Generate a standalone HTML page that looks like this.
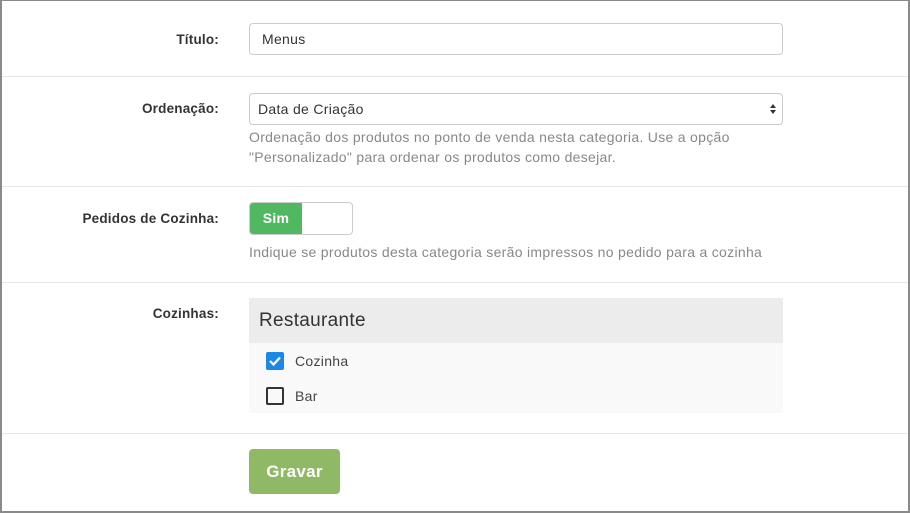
<!DOCTYPE html>
<html><head><style>
*{box-sizing:border-box}
body{margin:0;width:910px;height:513px;overflow:hidden;font-family:"Liberation Sans",sans-serif;background:#fff;letter-spacing:0.3px}
.frame{position:absolute;left:0;top:0;width:910px;height:513px;border:2px solid #8a8a8a;border-top:1px solid #8a8a8a}
.lbl{position:absolute;right:691px;font-weight:bold;font-size:13.5px;color:#333;letter-spacing:0.2px}
.hr{position:absolute;left:2px;right:2px;height:1px;background:#e6e6e6}
.inp{position:absolute;left:249px;width:534px;height:32px;border:1px solid #ccc;border-radius:4px;font-size:14px;color:#333;padding:7px 12px}
.help{position:absolute;left:249px;font-size:14px;color:#888;line-height:20px}
</style></head><body>
<div class="frame"></div>
<div class="lbl" style="top:32px">Título:</div>
<div class="inp" style="top:23px">Menus</div>
<div class="hr" style="top:76px"></div>
<div class="lbl" style="top:101px">Ordenação:</div>
<div class="inp" style="top:93px;padding-left:8px">Data de Criação
<svg style="position:absolute;right:5px;top:9px" width="8" height="12"><path d="M1 5L4 1L7 5Z M1 7L4 11L7 7Z" fill="#333"/></svg></div>
<div class="help" style="top:127px">Ordenação dos produtos no ponto de venda nesta categoria. Use a opção<br>"Personalizado" para ordenar os produtos como desejar.</div>
<div class="hr" style="top:186px"></div>
<div class="lbl" style="top:211px">Pedidos de Cozinha:</div>
<div style="position:absolute;left:249px;top:202px;width:104px;height:33px;border:1px solid #ccc;border-radius:4px;overflow:hidden">
<div style="width:52px;height:100%;background:#50b860;color:#fff;font-weight:bold;font-size:14px;text-align:center;line-height:31px">Sim</div></div>
<div class="help" style="top:242px">Indique se produtos desta categoria serão impressos no pedido para a cozinha</div>
<div class="hr" style="top:282px"></div>
<div class="lbl" style="top:306px">Cozinhas:</div>
<div style="position:absolute;left:249px;top:298px;width:534px;height:115px;background:#f9f9f9">
<div style="height:45px;background:#ececec;font-size:19px;color:#333;padding:12px 0 0 10px">Restaurante</div>
<div style="position:absolute;left:17px;top:54px;width:18px;height:18px;background:#1a88e6;border-radius:2px"><svg width="18" height="18"><path d="M4 9L7.5 12.5L14 5.5" stroke="#fff" stroke-width="2.2" fill="none"/></svg></div>
<div style="position:absolute;left:46px;top:55px;font-size:14px;color:#444">Cozinha</div>
<div style="position:absolute;left:17px;top:89px;width:18px;height:18px;border:2px solid #333;border-radius:2px"></div>
<div style="position:absolute;left:46px;top:90px;font-size:14px;color:#444">Bar</div>
</div>
<div class="hr" style="top:433px"></div>
<div style="position:absolute;left:249px;top:449px;width:91px;height:45px;background:#8fb965;border-radius:4px;color:#fff;font-weight:bold;font-size:17px;text-align:center;line-height:45px">Gravar</div>
</body></html>
